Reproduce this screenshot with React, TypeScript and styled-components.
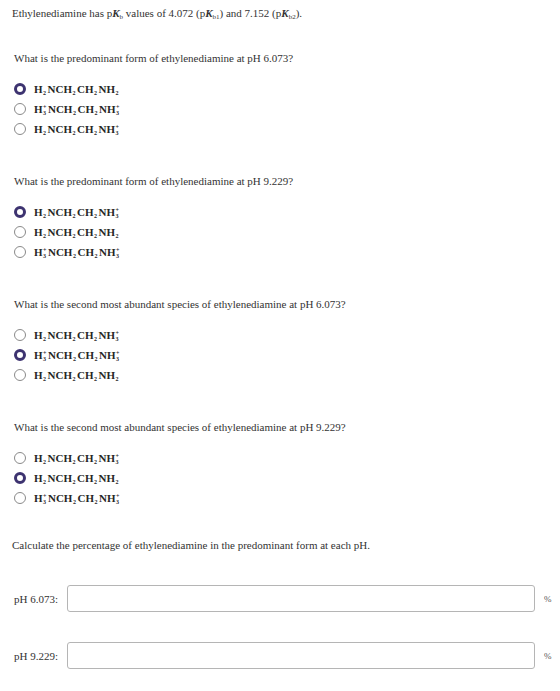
import React from "react";
import styled, { createGlobalStyle } from "styled-components";

const GlobalStyle = createGlobalStyle`
  html, body {
    margin: 0;
    padding: 0;
    background: #ffffff;
  }
  body {
    font-family: "Liberation Serif", "Times New Roman", serif;
    font-size: 11px;
    color: #333333;
  }
`;

type Segment = { t: string; sub?: string; sup?: string };

const NEUTRAL: Segment[] = [
  { t: "H", sub: "2" },
  { t: "NCH", sub: "2" },
  { t: "CH", sub: "2" },
  { t: "NH", sub: "2" },
];

const MONO: Segment[] = [
  { t: "H", sub: "2" },
  { t: "NCH", sub: "2" },
  { t: "CH", sub: "2" },
  { t: "NH", sub: "3", sup: "+" },
];

const DI: Segment[] = [
  { t: "H", sub: "3", sup: "+" },
  { t: "NCH", sub: "2" },
  { t: "CH", sub: "2" },
  { t: "NH", sub: "3", sup: "+" },
];

const questions = [
  {
    prompt: "What is the predominant form of ethylenediamine at pH 6.073?",
    options: [NEUTRAL, DI, MONO],
    selected: 0,
  },
  {
    prompt: "What is the predominant form of ethylenediamine at pH 9.229?",
    options: [MONO, NEUTRAL, DI],
    selected: 0,
  },
  {
    prompt: "What is the second most abundant species of ethylenediamine at pH 6.073?",
    options: [MONO, DI, NEUTRAL],
    selected: 1,
  },
  {
    prompt: "What is the second most abundant species of ethylenediamine at pH 9.229?",
    options: [MONO, NEUTRAL, DI],
    selected: 1,
  },
];

const Page = styled.div`
  padding: 6px 6px 20px 12px;
`;

const Intro = styled.p`
  margin: 0;
  line-height: 14px;
  white-space: nowrap;

  i {
    font-weight: bold;
  }

  sub {
    font-size: 7px;
    line-height: 0;
    vertical-align: -2px;
  }
`;

const Question = styled.section`
  margin-top: 31px;

  & + & {
    margin-top: 35px;
  }
`;

const Prompt = styled.p`
  margin: 0 0 14px 2px;
  line-height: 14px;
  white-space: nowrap;
`;

const OptionList = styled.div`
  display: flex;
  flex-direction: column;
  padding-left: 2px;
`;

const Option = styled.label`
  display: flex;
  align-items: center;
  gap: 8px;
  height: 20px;
`;

const Radio = styled.span<{ $checked: boolean }>`
  box-sizing: border-box;
  width: 12px;
  height: 12px;
  border-radius: 50%;
  flex-shrink: 0;
  background: #ffffff;
  border: ${(p) => (p.$checked ? "3.5px solid #3d3370" : "1px solid #8a8a8a")};
`;

const Formula = styled.span`
  font-weight: bold;
  font-size: 11px;
  line-height: 14px;
  color: #262626;
  white-space: nowrap;
`;

/* Stacked charge over count, e.g. H₃⁺ — the last line sets the baseline. */
const Scripts = styled.span`
  display: inline-block;
  font-size: 6px;
  line-height: 6px;
  vertical-align: -2px;
  margin: 0 1.5px 0 0.5px;
  text-align: left;
`;

const ScriptLine = styled.span`
  display: block;
`;

const Calculate = styled.p`
  margin: 30px 0 0 0;
  line-height: 14px;
`;

const AnswerRow = styled.div`
  display: flex;
  align-items: center;
  gap: 6px;
  margin-top: 33px;
  padding-left: 2px;

  & + & {
    margin-top: 30px;
  }
`;

const AnswerLabel = styled.span`
  flex-shrink: 0;
  width: 47px;
  white-space: nowrap;
`;

const AnswerInput = styled.input`
  flex: 1;
  height: 27px;
  box-sizing: border-box;
  border: 1px solid #b5b5b5;
  border-radius: 3px;
  background: #ffffff;
  font: inherit;
  padding: 0 6px;
  outline: none;
`;

const Unit = styled.span`
  width: 10px;
  margin-left: 3px;
  font-size: 9px;
  color: #555555;
`;

function Chem({ parts }: { parts: Segment[] }) {
  return (
    <Formula>
      {parts.map((p, i) => (
        <React.Fragment key={i}>
          {p.t}
          <Scripts>
            {p.sup && <ScriptLine>{p.sup}</ScriptLine>}
            <ScriptLine>{p.sub}</ScriptLine>
          </Scripts>
        </React.Fragment>
      ))}
    </Formula>
  );
}

export default function App() {
  return (
    <Page>
      <GlobalStyle />
      <Intro>
        Ethylenediamine has p<i>K</i>
        <sub>b</sub> values of 4.072 (p<i>K</i>
        <sub>b1</sub>) and 7.152 (p<i>K</i>
        <sub>b2</sub>).
      </Intro>

      {questions.map((q, qi) => (
        <Question key={qi}>
          <Prompt>{q.prompt}</Prompt>
          <OptionList>
            {q.options.map((opt, oi) => (
              <Option key={oi}>
                <Radio $checked={oi === q.selected} />
                <Chem parts={opt} />
              </Option>
            ))}
          </OptionList>
        </Question>
      ))}

      <Calculate>
        Calculate the percentage of ethylenediamine in the predominant form at each pH.
      </Calculate>

      <AnswerRow>
        <AnswerLabel>pH 6.073:</AnswerLabel>
        <AnswerInput type="text" />
        <Unit>%</Unit>
      </AnswerRow>
      <AnswerRow>
        <AnswerLabel>pH 9.229:</AnswerLabel>
        <AnswerInput type="text" />
        <Unit>%</Unit>
      </AnswerRow>
    </Page>
  );
}
